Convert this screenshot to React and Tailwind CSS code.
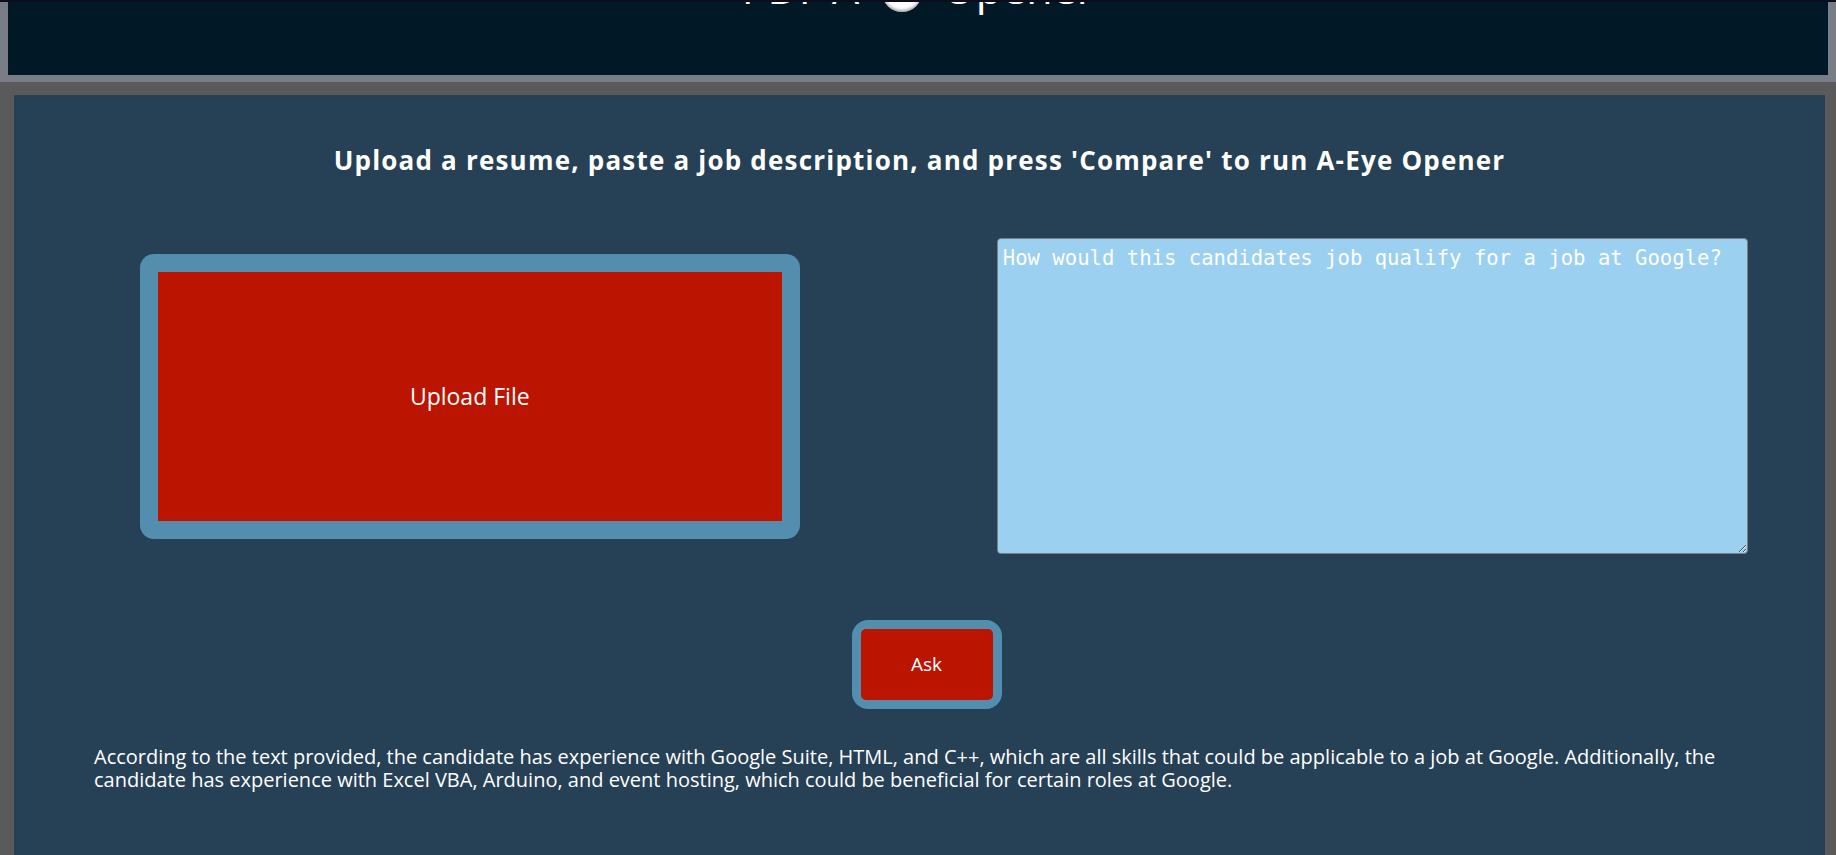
import React, { useState } from 'react';

export default function App() {
  const [prompt, setPrompt] = useState('How would this candidates job qualify for a job at Google?');
  const answer =
    'According to the text provided, the candidate has experience with Google Suite, HTML, and C++, which are all skills that could be applicable to a job at Google. Additionally, the candidate has experience with Excel VBA, Arduino, and event hosting, which could be beneficial for certain roles at Google.';

  return (
    <div className="min-h-[855px] bg-[#5a5a5a] font-['Open_Sans',sans-serif] text-white">
      {/* Header */}
      <div className="h-[2px] bg-[#0c0c1d]" />
      <header className="h-[80px] overflow-hidden border-x-8 border-b-[7px] border-[#797d86] bg-[#011827]">
        <h1 className="-mt-[43px] text-center text-[43px] leading-[58px] font-normal">
          PDF A-
          <span className="mx-[9px] inline-block h-[40px] w-[40px] rounded-full bg-white align-[-8px] shadow-[inset_0_-2px_3px_rgba(0,0,0,0.35)]" />
          {' '}Opener
        </h1>
      </header>

      {/* Main panel */}
      <main className="ml-[14px] mr-[11px] mt-[13px] min-h-[760px] bg-[#264055] pt-[48px] pb-10">
        <h2 className="text-center text-[26px] leading-[34px] font-bold tracking-[1.2px]">
          Upload a resume, paste a job description, and press 'Compare' to run A-Eye Opener
        </h2>

        <div className="mt-[61px] grid grid-cols-2 items-center">
          <div className="ml-[6px] justify-self-center rounded-[14px] bg-[#548eae] p-[18px]">
            <button className="flex h-[249px] w-[624px] items-center justify-center bg-[#bb1400] text-[23px]">
              Upload File
            </button>
          </div>
          <textarea
            value={prompt}
            onChange={(e) => setPrompt(e.target.value)}
            className="h-[316px] w-[751px] justify-self-center rounded-[4px] border border-[#7b7f84] bg-[#9bd0f1] pl-[5px] pt-[4px] font-['DejaVu_Sans_Mono',monospace] text-[20.6px] text-white outline-none"
          />
        </div>

        <div className="mt-[66px] flex justify-center">
          <div className="ml-[14px] rounded-[16px] bg-[#548eae] p-[9px]">
            <button className="h-[71px] w-[132px] rounded-[5px] bg-[#bb1400] text-[19px]">Ask</button>
          </div>
        </div>

        <p className="mt-[36px] px-[80px] text-[20px] leading-[23px]">{answer}</p>
      </main>
    </div>
  );
}
